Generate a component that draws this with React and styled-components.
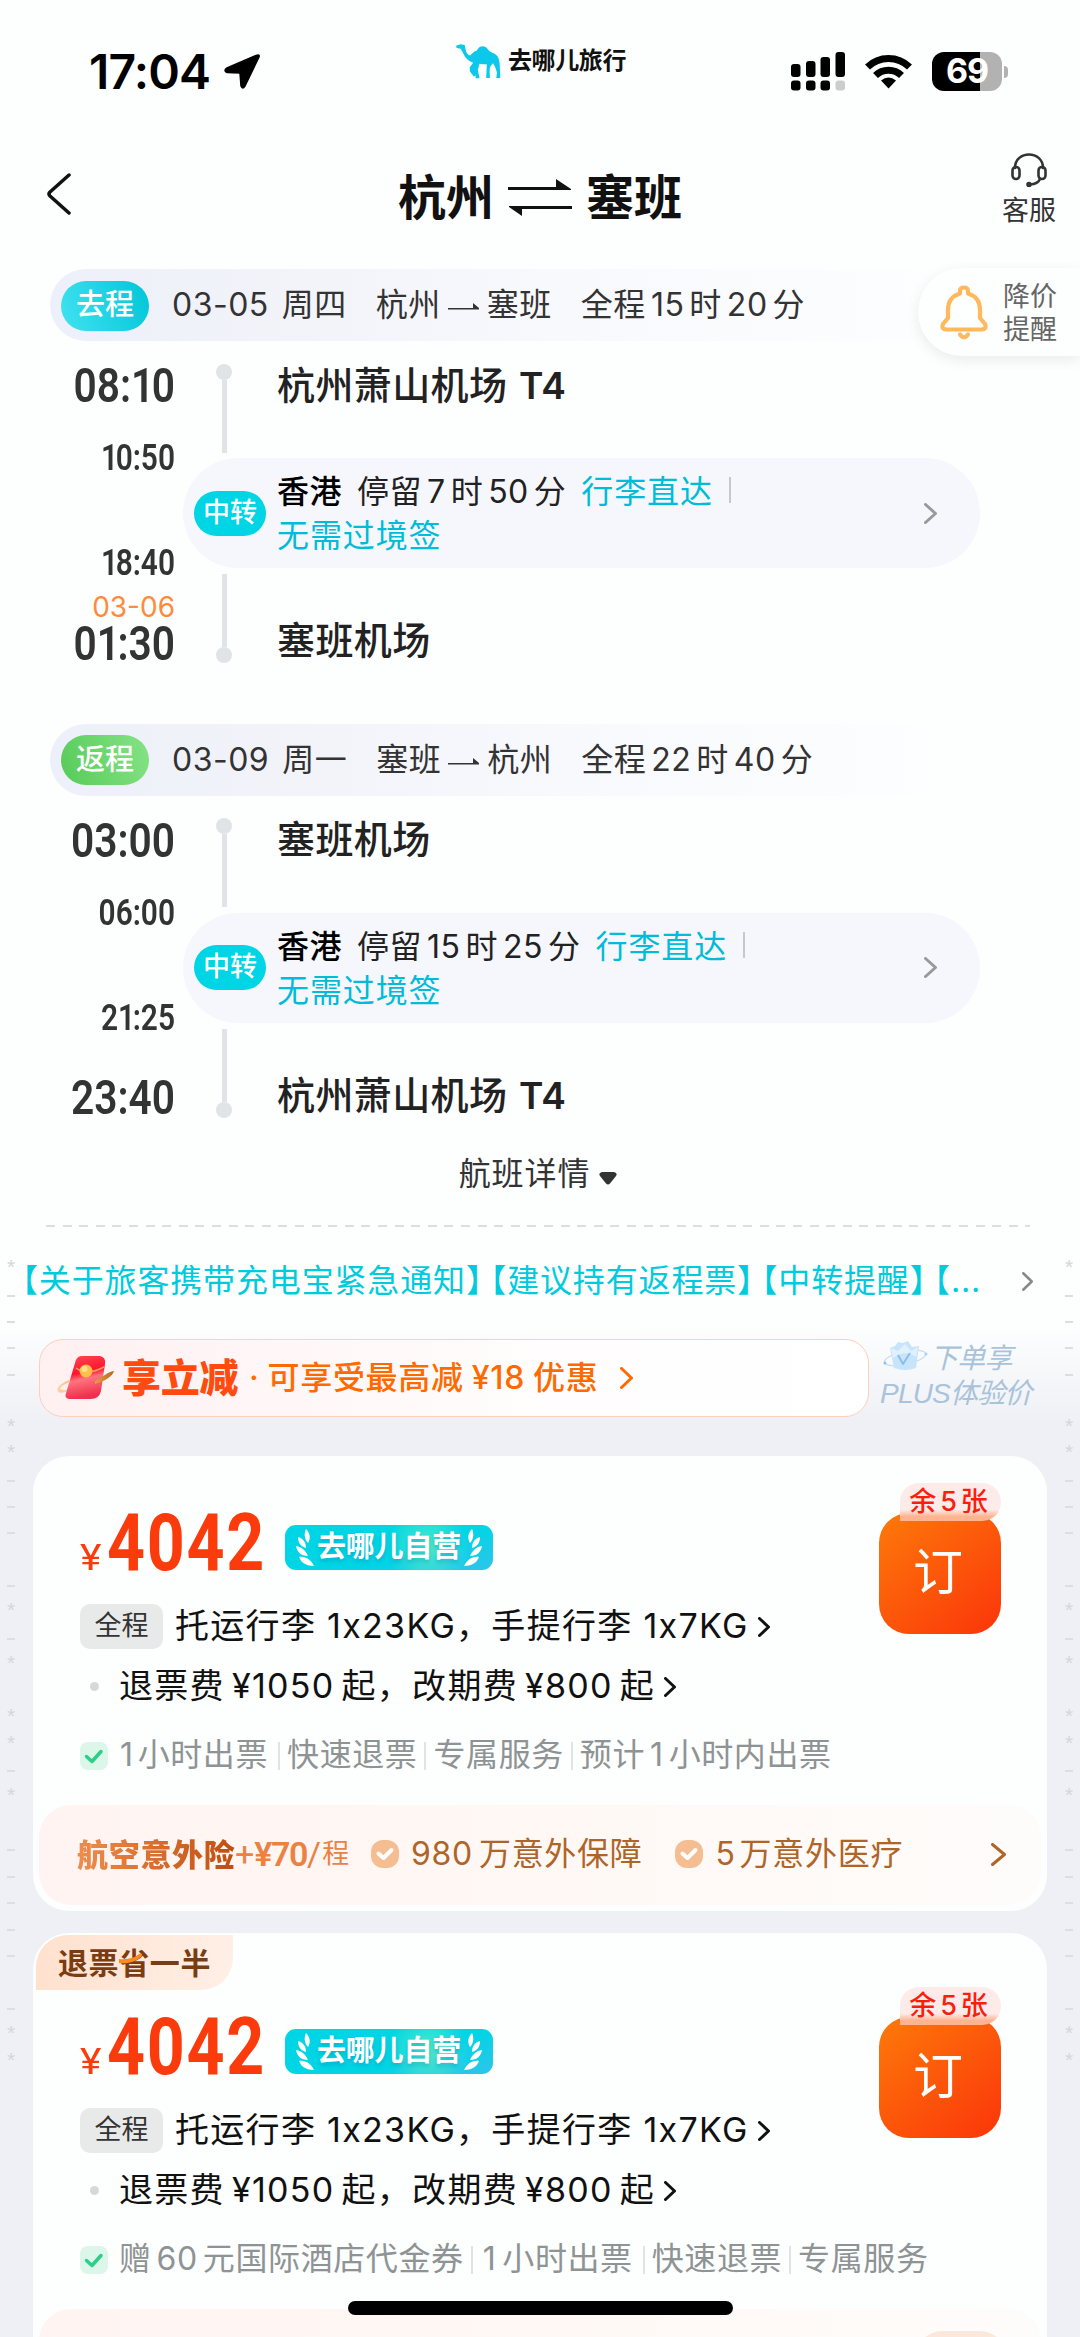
import React from "react";
import styled, { createGlobalStyle } from "styled-components";

const GlobalStyle = createGlobalStyle`
  * {
    box-sizing: border-box;
  }
  body {
    margin: 0;
    font-family: Inter, "Noto Sans CJK SC", sans-serif;
    line-height: 1.2;
    color: #333;
    background: #eff0f5;
  }
  p {
    margin: 0;
  }
  svg {
    display: block;
    flex: none;
  }
`;

const Page = styled.div`
  position: relative;
  width: 1080px;
  height: 2337px;
  overflow: hidden;
  white-space: nowrap;
  background: linear-gradient(
    #fdfefe 0,
    #fdfefe 1325px,
    #eff0f5 1425px,
    #eff0f5 100%
  );
`;

/* ---------- status bar ---------- */
const StatusBar = styled.div`
  display: flex;
  align-items: center;
  height: 143px;
  padding: 0 72px 0 89px;
`;
const Clock = styled.span`
  width: 134px;
  font-size: 48px;
  font-weight: 600;
  letter-spacing: -0.8px;
  color: #000;
`;
const Brand = styled.div`
  display: flex;
  align-items: center;
  gap: 7px;
  margin: 0 0 21px 195px;
  font-size: 24px;
  font-weight: 700;
  letter-spacing: -0.4px;
  color: #111;
`;
const StatusIcons = styled.div`
  display: flex;
  align-items: center;
  margin-left: auto;
`;
const Battery = styled.div`
  display: flex;
  align-items: center;
  justify-content: center;
  width: 70px;
  height: 39px;
  margin-left: 20px;
  border-radius: 12px;
  background: linear-gradient(90deg, #000 69%, #b2b2b2 69%);
  color: #fff;
  font-size: 34px;
  font-weight: 700;
  letter-spacing: -1px;
`;
const BatteryCap = styled.div`
  width: 4px;
  height: 12px;
  margin-left: 2px;
  border-radius: 0 4px 4px 0;
  background: #b2b2b2;
`;

/* ---------- nav ---------- */
const NavBar = styled.div`
  display: grid;
  grid-template-columns: 160px 1fr 160px;
  align-items: center;
  height: 109px;
  padding: 0 24px 0 46px;
`;
const BackIcon = styled.svg`
  margin-top: -7px;
`;
const Title = styled.div`
  display: flex;
  align-items: center;
  justify-content: center;
  gap: 14px;
  margin-left: -22px;
  font-size: 48px;
  font-weight: 700;
  color: #111;
`;
const Service = styled.div`
  display: flex;
  flex-direction: column;
  align-items: center;
  justify-self: end;
  margin-top: -12px;
  font-size: 27px;
  line-height: 40px;
  svg {
    margin-bottom: 4px;
  }
`;

/* ---------- journey ---------- */
const Journey = styled.div`
  padding-top: 17px;
`;
const LegHeader = styled.div`
  display: flex;
  align-items: center;
  height: 72px;
  margin: 0 120px 0 50px;
  padding: 1px 0 0 11px;
  border-radius: 36px 0 0 36px;
  background: linear-gradient(90deg, #edf0fa, #f3f4f9 30%, #f8f9fd 55%, #fdfefe);
  font-size: 32px;
  letter-spacing: 0.5px;
`;
const Direction = styled.span`
  display: flex;
  align-items: center;
  justify-content: center;
  width: 88px;
  height: 50px;
  margin-right: 23px;
  border-radius: 25px;
  background: ${(props) =>
    props.$back
      ? "linear-gradient(70deg, #56cb58, #86e386)"
      : "linear-gradient(70deg, #42e2f0, #00c6d8)"};
  color: #fff;
  font-size: 29px;
  font-weight: 500;
  letter-spacing: 0;
`;
const Part = styled.span`
  display: flex;
  align-items: center;
  margin-right: ${(props) => props.$gap || 0}px;
`;
const Num = styled.span`
  margin: 0 ${(props) => (props.$gap === undefined ? 5 : props.$gap)}px;
`;
const ArrowIcon = styled.svg`
  margin: 3px 7px 0 0;
`;

const LegBody = styled.div`
  display: grid;
  grid-template-columns: 183px 797px;
  height: ${(props) => props.$height}px;
`;
const Times = styled.div`
  display: flex;
  flex-direction: column;
  width: 175px;
`;
const Time = styled.span`
  display: flex;
  align-items: center;
  justify-content: flex-end;
  height: ${(props) => props.$height}px;
  margin-top: ${(props) => props.$top || 0}px;
  padding-top: 2px;
  font-family: Roboto, "Noto Sans CJK SC", sans-serif;
  font-size: ${(props) => (props.$small ? 36 : 49)}px;
  font-weight: 600;
  transform: scaleX(0.83);
  transform-origin: right center;
`;
const One = styled.span`
  letter-spacing: -3px;
`;
const DayShift = styled.span`
  display: flex;
  align-items: center;
  justify-content: flex-end;
  height: 33px;
  font-size: 28px;
  color: #ff8a3c;
`;
const StopRow = styled.div`
  display: flex;
  height: ${(props) => props.$height}px;
  padding-top: ${(props) => props.$top}px;
`;
const Track = styled.div`
  display: flex;
  flex-direction: ${(props) => (props.$end ? "column-reverse" : "column")};
  align-items: center;
  width: 82px;
  height: 89px;
  &::before {
    content: "";
    width: 16px;
    height: 16px;
    border-radius: 50%;
    background: #e1e4e6;
  }
  &::after {
    content: "";
    flex: 1;
    width: 5px;
    background: #e1e4e6;
  }
`;
const Station = styled.p`
  height: 40px;
  margin: ${(props) => props.$top}px 0 0 12px;
  font-size: 38px;
  line-height: 40px;
  font-weight: 500;
  letter-spacing: 0.4px;
  color: #222;
  b {
    margin-left: 1px;
    font-weight: 600;
    font-size: 37px;
  }
`;
const Transfer = styled.div`
  display: flex;
  align-items: center;
  height: 110px;
  padding: 0 43px 0 11px;
  border-radius: 55px;
  background: #f6f7fc;
`;
const TransferBadge = styled.span`
  display: flex;
  align-items: center;
  justify-content: center;
  width: 72px;
  height: 45px;
  margin-right: 11px;
  border-radius: 23px;
  background: #00d5e5;
  color: #fff;
  font-size: 27px;
  font-weight: 500;
`;
const TransferText = styled.div`
  flex: 1;
  padding-top: 2px;
  font-size: 32px;
  line-height: 44px;
  letter-spacing: 0.5px;
  color: #222;
  b {
    margin-right: 15px;
    font-weight: 500;
    color: #000;
  }
  em {
    font-style: normal;
    letter-spacing: 0.9px;
    color: #00bcd8;
  }
  em + i {
    margin-left: 16px;
  }
`;
const Stay = styled.span`
  margin-right: 15px;
`;
const Bar = styled.i`
  display: inline-block;
  width: 2px;
  height: ${(props) => props.$height || 26}px;
  margin: 0 ${(props) => props.$gap || 0}px;
  background: ${(props) => props.$color || "#c5c8d2"};
`;
const Details = styled.div`
  display: flex;
  align-items: center;
  justify-content: center;
  gap: 9px;
  height: 64px;
  margin-left: -4px;
  padding-bottom: 2px;
  font-size: 32px;
  letter-spacing: 0.9px;
  svg {
    margin-top: 7px;
  }
`;
const Dashes = styled.div`
  height: 2px;
  margin: 17px 50px 0 46px;
  background: repeating-linear-gradient(
    90deg,
    #dcdfe0 0,
    #dcdfe0 9px,
    transparent 9px,
    transparent 16.6px
  );
`;

const PriceAlert = styled.div`
  position: absolute;
  top: 268px;
  right: 0;
  display: flex;
  align-items: center;
  gap: 15px;
  width: 162px;
  height: 88px;
  padding-left: 22px;
  border-radius: 44px 0 0 44px;
  background: #fdfefe;
  box-shadow: 0 4px 14px rgba(0, 0, 0, 0.08);
  color: #666;
  font-size: 27px;
  line-height: 33px;
  div {
    padding-top: 2px;
  }
`;

/* ---------- notice + promo ---------- */
const Notice = styled.div`
  display: flex;
  align-items: center;
  height: 110px;
  padding-left: 22px;
  color: #00cbdd;
  font-size: 32px;
  letter-spacing: 0.85px;
  svg {
    margin-left: 41px;
  }
`;
const NoticeItem = styled.span`
  margin-right: 7.5px;
`;
// brackets take half a cell so neighbouring notices sit close together
const Bracket = styled.span`
  font-feature-settings: "halt";
`;
const PromoRow = styled.div`
  display: flex;
  height: 78px;
  margin-top: 2px;
  padding-left: 39px;
`;
const Promo = styled.div`
  display: flex;
  align-items: center;
  width: 830px;
  padding: 1px 0 0 17px;
  border: 1.5px solid #ffcfbb;
  border-radius: 24px;
  background: linear-gradient(90deg, #fff0f1, #fffdfd 60%, #fff);
  color: #ff6a00;
  font-size: 32px;
  font-weight: 500;
  letter-spacing: 0.7px;
  strong {
    margin: 0 11px 0 7px;
    font-size: 39px;
    font-weight: 900;
    letter-spacing: -0.3px;
    color: #ff4a10;
  }
`;
const PromoText = styled.span`
  margin: 0 8px;
`;
const Plus = styled.div`
  margin: 2px 0 0 11px;
  color: #a9c3da;
  font-size: 28px;
  line-height: 35px;
  font-style: italic;
  letter-spacing: -0.7px;
  div {
    display: flex;
    gap: 2px;
    margin-left: 3px;
  }
  p {
    font-family: "Liberation Sans", "Noto Sans CJK SC", sans-serif;
    font-size: 28px;
    letter-spacing: -0.8px;
  }
`;

/* ---------- fare cards ---------- */
const Card = styled.div`
  height: 455px;
  margin: ${(props) => props.$top}px 33px 0;
  border-radius: 36px;
  background: #fdfefe;
`;
const CardLabel = styled.div`
  display: flex;
  align-items: center;
  position: relative;
  top: 2.5px;
  width: 197px;
  height: 55px;
  margin: 0 0 -28px 3px;
  padding-left: 22px;
  border-radius: 32px 0 32px 0;
  background: linear-gradient(90deg, #ffe1ce, #ffefe6);
  color: #7a3c12;
  font-size: 30px;
  font-weight: 700;
  letter-spacing: 0.6px;
  svg {
    position: absolute;
    left: 83px;
    top: 18px;
  }
`;
const CardTop = styled.div`
  display: flex;
  justify-content: space-between;
  padding: 0 46px 0 47px;
`;
const PriceRow = styled.div`
  display: flex;
  align-items: center;
  height: 78px;
  margin-top: 48px;
`;
const Price = styled.span`
  display: flex;
  align-items: baseline;
  width: 205px;
  padding-top: 1px;
  font-family: Roboto, sans-serif;
  color: #fb3b0c;
  i {
    width: 27px;
    font-style: normal;
    font-size: 37px;
    font-weight: 400;
    transform: scaleX(1.1);
    transform-origin: left center;
  }
  b {
    margin-left: 8px;
    font-size: 79px;
    font-weight: 700;
    line-height: 78px;
    letter-spacing: 2px;
    transform: scaleX(0.84);
    transform-origin: left center;
  }
`;
const SelfRun = styled.span`
  display: flex;
  align-items: center;
  justify-content: space-between;
  width: 208px;
  height: 45px;
  margin-top: 10px;
  padding: 0 11px;
  border-radius: 11px;
  background: radial-gradient(
      circle at 45% 50%,
      rgba(110, 245, 190, 0.7),
      rgba(110, 245, 190, 0) 60%
    )
    90px 0 / 118px 45px no-repeat,
    linear-gradient(160deg, #00d5e5 60%, #2fc4ea);
  color: #fff;
  font-size: 29px;
  font-weight: 700;
  text-shadow: 0 3px 4px rgba(0, 120, 160, 0.35);
  letter-spacing: -0.2px;
`;
const Line = styled.div`
  display: flex;
  align-items: center;
  height: 60px;
  margin-top: ${(props) => props.$top || 0}px;
  font-size: 34px;
  letter-spacing: 1.3px;
  color: #111;
`;
const Scope = styled.span`
  display: flex;
  align-items: center;
  justify-content: center;
  width: 83px;
  height: 45px;
  margin-right: 12px;
  border-radius: 10px;
  background: #e8eaea;
  color: #333;
  font-size: 27px;
  letter-spacing: 0;
`;
const Dot = styled.i`
  width: 9px;
  height: 9px;
  margin: 0 20px 0 10px;
  border-radius: 50%;
  background: #d6d9da;
`;
const Perks = styled.div`
  display: flex;
  align-items: center;
  height: 78px;
  font-size: 32px;
  letter-spacing: 0.6px;
  color: #8e9394;
  svg {
    margin-right: 11px;
  }
`;
const Book = styled.div`
  display: flex;
  flex-direction: column;
  align-items: flex-end;
  width: 122px;
  margin: 27px 0 0 -200px;
`;
const Left = styled.span`
  position: relative;
  z-index: 1;
  display: flex;
  align-items: center;
  justify-content: center;
  width: 101px;
  height: 38px;
  margin-bottom: -8px;
  padding: 1px 4px 0 0;
  border-radius: 20px 20px 20px 0;
  background: linear-gradient(#fdebea 70%, #ffb491 88%);
  color: #fb1e0c;
  font-size: 27px;
  font-weight: 500;
`;
const BookButton = styled.div`
  display: flex;
  align-items: center;
  justify-content: center;
  width: 122px;
  height: 121px;
  padding: 0 4px 2px 0;
  border-radius: 30px;
  background: linear-gradient(140deg, #fd7a0a, #fb350a);
  color: #fff;
  font-size: 50px;
`;
const Insurance = styled.div`
  display: flex;
  align-items: center;
  height: 100px;
  margin: 10px 6px 0;
  padding: 0 35px 0 38px;
  border-radius: 32px;
  background: linear-gradient(90deg, #fff4f1, #fff9f6 60%, #fefcfb);
  font-size: 32px;
  letter-spacing: 0.7px;
  color: #af6428;
`;
const InsuranceName = styled.b`
  width: 158px;
  font-size: 31px;
  letter-spacing: 0.7px;
  font-weight: 900;
  background: linear-gradient(90deg, #f08d4c, #bf4e10);
  background-clip: text;
  -webkit-background-clip: text;
  color: transparent;
`;
const InsuranceFee = styled.span`
  display: flex;
  align-items: center;
  width: 136px;
  color: #eb8242;
  font-family: Roboto, "Noto Sans CJK SC", sans-serif;
  font-size: 34px;
  letter-spacing: 0;
  b {
    font-weight: 600;
    letter-spacing: -1.4px;
  }
  small {
    margin-left: 1px;
    font-size: 27px;
  }
`;
const Benefit = styled.span`
  display: flex;
  align-items: center;
  margin-right: 33px;
  svg {
    margin-right: 12px;
  }
`;
const MorePill = styled.div`
  align-self: flex-end;
  width: 90px;
  height: 78px;
  margin: 0 0 0 auto;
  border-radius: 26px;
  background: #fce8da;
`;

/* ---------- overlays ---------- */
const Rail = styled.div`
  position: absolute;
  top: 1251px;
  ${(props) => props.$side}: 7px;
  width: 8px;
  color: #d4d7da;
  font-family: "Liberation Sans", sans-serif;
  font-size: 21px;
  line-height: 26px;
`;
const Star = styled.div`
  height: 26.43px;
  padding-top: 3px;
`;
const Dash = styled.div`
  display: flex;
  align-items: center;
  height: 26.43px;
  padding-top: 10px;
  &::before {
    content: "";
    width: 8px;
    height: ${(props) => (props.$blank ? 0 : 2)}px;
    background: #dcdfe1;
  }
`;
const HomeIndicator = styled.div`
  position: absolute;
  left: 348px;
  bottom: 22px;
  width: 385px;
  height: 14px;
  border-radius: 7px;
  background: #000;
`;

const Chevron = ({ w = 13, h = 21, color = "#999", stroke = 3, ml = 0 }) => (
  <svg
    width={w}
    height={h}
    viewBox={`0 0 ${w} ${h}`}
    fill="none"
    stroke={color}
    strokeWidth={stroke}
    strokeLinecap="round"
    strokeLinejoin="round"
    style={ml ? { marginLeft: ml } : undefined}
  >
    <path
      d={`M${stroke / 2} ${stroke / 2}L${w - stroke / 2} ${h / 2}L${stroke / 2} ${h - stroke / 2}`}
    />
  </svg>
);

const Camel = () => (
  <svg width="45" height="35" viewBox="0 0 134 102" fill="#0cc8ea">
    <path d="M0 4L14 0L26 2L28 13C30 24 34 31 42 33C50 26 53 20 62 18C68 5 84 1 93 12C98 20 104 23 113 27C125 33 129 43 130 58L132 100H120L122 84L116 66L110 56C104 62 101 68 100 76L101 100H90L91 76L92 60C84 58 76 60 70 58L65 76L70 101H58L59 92L50 80L47 71L53 84L59 93L53 96L41 80V68L51 55C38 50 27 40 22 28L14 13L2 11Z" />
  </svg>
);

const Swap = () => (
  <svg width="64" height="38" viewBox="0 0 64 38" fill="#111">
    <path d="M0 8H48V0L63 10V11H0Z" />
    <path d="M64 27V30H14V37L1 28V27Z" />
  </svg>
);

const Laurel = ({ flip }) => (
  <svg
    width="18"
    height="37"
    viewBox="0 0 18 37"
    fill="#fff"
    transform={flip ? "scale(-1 1)" : undefined}
  >
    <path d="M10 0C14 4 15 9 12 14C8 10 8 4 10 0Z" />
    <path d="M2 8C8 10 10 14 10 19C4 17 2 13 2 8Z" />
    <path d="M0 17C6 18 10 22 12 27C5 27 1 23 0 17Z" />
    <path d="M3 28C10 27 15 31 18 37C11 37 5 34 3 28Z" />
  </svg>
);

const Envelope = () => (
  <svg width="58" height="46" viewBox="0 0 58 46">
    <defs>
      <linearGradient id="env" x1="0" y1="0" x2="0.2" y2="1">
        <stop offset="0" stopColor="#ff4a52" />
        <stop offset="0.45" stopColor="#ff1430" />
        <stop offset="0.6" stopColor="#ff7480" />
        <stop offset="1" stopColor="#f0304c" />
      </linearGradient>
      <linearGradient id="ring">
        <stop offset="0" stopColor="#ffd2a0" />
        <stop offset="0.6" stopColor="#f6a84a" />
        <stop offset="1" stopColor="#b06a20" />
      </linearGradient>
    </defs>
    <path
      d="M24 1H43Q49 2 48 9L44 36Q42 44 34 44H12Q7 43 9 38L18 8Q19 2 24 1Z"
      fill="url(#env)"
    />
    <path d="M19 13Q30 21 47 12" fill="none" stroke="#ff9a60" strokeWidth="1.5" />
    <circle cx="29" cy="16" r="6.5" fill="#ffc04a" />
    <circle cx="27.5" cy="14" r="3" fill="#ffe08a" />
    <path
      d="M12 25C-4 32 -2 40 8 37L10 35C0 36 2 31 13 27ZM38 29C48 26 56 21 57 16C50 17 46 22 38 26Z"
      fill="url(#ring)"
    />
  </svg>
);

const Crown = () => (
  <svg width="45" height="30" viewBox="0 0 45 30">
    <ellipse
      cx="22"
      cy="17"
      rx="21"
      ry="6.5"
      fill="none"
      stroke="#c3def4"
      strokeWidth="1.2"
      transform="rotate(-12 22 17)"
    />
    <path
      d="M7 7L12 5L15 1L20 2L25 0L29 6L36 5L33 27Q22 31 11 27Z"
      fill="#c6e5fb"
    />
    <path d="M8 7L15 10L22 3L28 10L35 6L33 16Q22 8 10 17Z" fill="#e0f1fd" />
    <path
      d="M15 14L20 23L27 12"
      fill="none"
      stroke="#8dbde6"
      strokeWidth="2"
      strokeLinejoin="round"
    />
    <circle cx="2" cy="22" r="1.5" fill="#8fc0ea" />
    <circle cx="43" cy="13" r="1.5" fill="#a9d2f4" />
  </svg>
);

const CheckBox = ({ bg, color, round, stroke = 3.5 }) => (
  <svg width="28" height="28" viewBox="0 0 28 28" fill="none">
    <rect width="28" height="28" rx={round ? 12 : 8} fill={bg} />
    <path
      d={round ? "M7.5 13.5L12.5 18L20.5 10" : "M6.5 14.5L12 19.5L21 9.5"}
      stroke={color}
      strokeWidth={stroke}
      strokeLinecap="round"
      strokeLinejoin="round"
    />
  </svg>
);

const legs = [
  {
    name: "去程",
    date: "03-05",
    day: "周四",
    from: "杭州",
    to: "塞班",
    total: [15, 20],
    times: ["08:10", "10:50", "18:40", "01:30"],
    shift: "03-06",
    start: ["杭州萧山机场", "T4"],
    end: ["塞班机场"],
    stay: [7, 50],
    height: 382.5,
  },
  {
    name: "返程",
    back: true,
    date: "03-09",
    day: "周一",
    from: "塞班",
    to: "杭州",
    total: [22, 40],
    times: ["03:00", "06:00", "21:25", "23:40"],
    start: ["塞班机场"],
    end: ["杭州萧山机场", "T4"],
    stay: [15, 25],
    height: 348,
  },
];

const ClockTime = ({ value, ...rest }) => (
  <Time {...rest}>
    {value.split("1").map((chunk, i) => (
      <React.Fragment key={i}>
        {i > 0 && <One>1</One>}
        {chunk}
      </React.Fragment>
    ))}
  </Time>
);

const StationName = ({ station, top }) => (
  <Station $top={top}>
    {station[0]} {station[1] && <b>{station[1]}</b>}
  </Station>
);

const Leg = ({ leg }) => (
  <>
    <LegHeader>
      <Direction $back={leg.back}>{leg.name}</Direction>
      <Part $gap={13}>{leg.date}</Part>
      <Part $gap={29}>{leg.day}</Part>
      <Part $gap={7}>{leg.from}</Part>
      <ArrowIcon width="32" height="8" viewBox="0 0 32 8" fill="#333">
        <path d="M0 5H25V0L31 5V6.5H0Z" />
      </ArrowIcon>
      <Part $gap={29}>{leg.to}</Part>
      <Part>
        全程<Num>{leg.total[0]}</Num>时<Num>{leg.total[1]}</Num>分
      </Part>
    </LegHeader>
    <LegBody $height={leg.height}>
      <Times>
        <ClockTime value={leg.times[0]} $height={89} />
        <ClockTime value={leg.times[1]} $small $height={56} />
        <ClockTime value={leg.times[2]} $small $height={56} $top={49} />
        <DayShift>{leg.shift}</DayShift>
        <ClockTime value={leg.times[3]} $height={38} />
      </Times>
      <div>
        <StopRow $height={117} $top={22.5}>
          <Track />
          <StationName station={leg.start} top={1} />
        </StopRow>
        <Transfer>
          <TransferBadge>中转</TransferBadge>
          <TransferText>
            <p>
              <b>香港</b>
              <Stay>
                停留<Num>{leg.stay[0]}</Num>时<Num>{leg.stay[1]}</Num>分
              </Stay>
              <em>行李直达</em>
              <Bar />
            </p>
            <p>
              <em>无需过境签</em>
            </p>
          </TransferText>
          <Chevron />
        </Transfer>
        <StopRow $height={95} $top={6}>
          <Track $end />
          <StationName station={leg.end} top={46} />
        </StopRow>
      </div>
    </LegBody>
  </>
);

const fares = [
  {
    perks: [
      <>
        <Num $gap={1}>1</Num>
        <Num $gap={3}>小时出票</Num>
      </>,
      "快速退票",
      "专属服务",
      <>
        预计<Num>1</Num>小时内出票
      </>,
    ],
    insurance: true,
  },
  {
    label: "退票省一半",
    perks: [
      <>
        赠<Num>60</Num>元国际酒店代金券
      </>,
      <>
        <Num $gap={3}>1</Num>
        <Num $gap={3}>小时出票</Num>
      </>,
      "快速退票",
      "专属服务",
    ],
  },
];

const Fare = ({ fare, top }) => (
  <Card $top={top}>
    {fare.label && (
      <CardLabel>
        {fare.label}
        <svg width="24" height="11" viewBox="0 0 24 11" fill="#ff8a1c">
          <path d="M0 6C8 7 16 5 22 0L23 3C17 9 9 11 0 10Z" />
        </svg>
      </CardLabel>
    )}
    <CardTop>
      <div>
        <PriceRow>
          <Price>
            <i>¥</i>
            <b>4042</b>
          </Price>
          <SelfRun>
            <Laurel />
            去哪儿自营
            <Laurel flip />
          </SelfRun>
        </PriceRow>
        <Line $top={15}>
          <Scope>全程</Scope>
          托运行李 1x23KG，手提行李 1x7KG
          <Chevron w={12} h={20} color="#111" ml={9} />
        </Line>
        <Line>
          <Dot />
          退票费<Num $gap={7}>¥1050</Num>起，改期费<Num $gap={7}>¥800</Num>起
          <Chevron w={12} h={20} color="#111" ml={9} />
        </Line>
        <Perks>
          <CheckBox bg="#dcf6ea" color="#2bcf8a" />
          {fare.perks.map((perk, i) => (
            <React.Fragment key={i}>
              {i > 0 && <Bar $gap={7} $height={28} $color="#e0e3e3" />}
              {perk}
            </React.Fragment>
          ))}
        </Perks>
      </div>
      <Book>
        <Left>
          余<Num $gap={4}>5</Num>张
        </Left>
        <BookButton>订</BookButton>
      </Book>
    </CardTop>
    <Insurance>
      {fare.insurance ? (
        <>
          <InsuranceName>航空意外险</InsuranceName>
          <InsuranceFee>
            +<b>¥70</b>/<small>程</small>
          </InsuranceFee>
          <Benefit>
            <CheckBox bg="#f5be92" color="#fff" round stroke={4} />
            980<Num $gap={3} />万意外保障
          </Benefit>
          <Benefit>
            <CheckBox bg="#f5be92" color="#fff" round stroke={4} />
            5<Num $gap={2} />万意外医疗
          </Benefit>
          <Chevron w={15} h={23} color="#af6428" ml="auto" />
        </>
      ) : (
        <MorePill />
      )}
    </Insurance>
  </Card>
);

const marks = "*---- **--- -*-* **-* ----- -**".split("");

const App = () => {
  return (
    <>
      <GlobalStyle />
      <Page>
        <StatusBar>
          <Clock>17:04</Clock>
          <svg width="38" height="37" viewBox="0 0 38 37">
            <path
              d="M33 2.5L4 15Q0 17.5 4 19.5L17 20L18 33Q19.5 37 22 33L36 4Q37 1 33 2.5Z"
              stroke="#000"
              strokeWidth="1.5"
            />
          </svg>
          <Brand>
            <Camel />
            去哪儿旅行
          </Brand>
          <StatusIcons>
            <svg width="54" height="39" viewBox="0 0 54 39">
              <rect x="0" y="12" width="9.5" height="13" rx="3" />
              <rect x="15" y="9" width="9.5" height="16" rx="3" />
              <rect x="29.5" y="5" width="9.5" height="20" rx="3" />
              <rect x="44.5" y="0" width="9.5" height="25" rx="3" />
              <rect x="0" y="28.5" width="9.5" height="10" rx="3" />
              <rect x="15" y="28.5" width="9.5" height="10" rx="3" />
              <rect x="29.5" y="28.5" width="9.5" height="10" rx="3" />
              <rect x="44.5" y="28.5" width="9.5" height="10" rx="3" fill="#ccc" />
            </svg>
            <svg
              width="47"
              height="35"
              viewBox="0 0 47 35"
              fill="none"
              stroke="#000"
              strokeWidth="7"
              style={{ marginLeft: 20 }}
            >
              <path d="M2.5 13A30 30 0 0 1 44.5 13" />
              <path d="M10.5 21.5A18.5 18.5 0 0 1 36.5 21.5" />
              <path d="M16 26.5Q23.5 20.5 31 26.5L23.5 34.5Z" fill="#000" stroke="none" />
            </svg>
            <Battery>69</Battery>
            <BatteryCap />
          </StatusIcons>
        </StatusBar>

        <NavBar>
          <BackIcon
            width="26"
            height="42"
            viewBox="0 0 26 42"
            fill="none"
            stroke="#111"
            strokeWidth="3.5"
            strokeLinecap="round"
            strokeLinejoin="round"
          >
            <path d="M23 2L4 19Q2 21 4 23L23 40" />
          </BackIcon>
          <Title>
            杭州
            <Swap />
            塞班
          </Title>
          <Service>
            <svg
              width="36"
              height="34"
              viewBox="0 0 36 34"
              fill="none"
              stroke="#333"
              strokeWidth="2.6"
              strokeLinecap="round"
            >
              <path d="M4 15C4 -3 32 -3 32 15" />
              <rect x="1.5" y="14" width="7" height="12" rx="3.5" />
              <rect x="27.5" y="14" width="7" height="12" rx="3.5" />
              <path d="M29 26Q27 31 19 31.5" />
              <circle cx="18" cy="31.5" r="1.5" />
            </svg>
            客服
          </Service>
        </NavBar>

        <Journey>
          {legs.map((leg) => (
            <Leg key={leg.name} leg={leg} />
          ))}
          <Details>
            航班详情
            <svg width="18" height="13" viewBox="0 0 18 13" fill="#333">
              <path d="M3 0H15Q19 1 17 4L11 11.5Q9 13.5 7 11.5L1 4Q-1 1 3 0Z" />
            </svg>
          </Details>
          <Dashes />
        </Journey>

        <Notice>
          {["关于旅客携带充电宝紧急通知", "建议持有返程票", "中转提醒"].map((text) => (
            <NoticeItem key={text}>
              <Bracket>【</Bracket>
              {text}
              <Bracket>】</Bracket>
            </NoticeItem>
          ))}
          <span>
            <Bracket>【</Bracket>...
          </span>
          <Chevron w={11} h={19} color="#888" stroke={2.5} />
        </Notice>

        <PromoRow>
          <Promo>
            <Envelope />
            <strong>享立减</strong>·<PromoText>可享受最高减</PromoText>¥18
            <Num $gap={8}>优惠</Num>
            <Chevron w={13} h={22} color="#ff6a00" ml={14} />
          </Promo>
          <Plus>
            <div>
              <Crown />
              下单享
            </div>
            <p>PLUS体验价</p>
          </Plus>
        </PromoRow>

        <Fare fare={fares[0]} top={39} />
        <Fare fare={fares[1]} top={22} />

        <PriceAlert>
          <svg
            width="48"
            height="55"
            viewBox="0 0 48 55"
            fill="none"
            stroke="#ffb85c"
            strokeWidth="4.2"
            strokeLinecap="round"
            strokeLinejoin="round"
          >
            <path d="M20 8.5V6Q20 2.5 24 2.5Q28 2.5 28 6V8.5Q40 12 40 25V33L45 39Q47 44 42 44.5H6Q1 44 3 39L8 33V25Q8 12 20 8.5Z" />
            <path d="M20 49.5Q24 55 28 49.5" />
          </svg>
          <div>
            降价
            <br />
            提醒
          </div>
        </PriceAlert>
        {["left", "right"].map((side) => (
          <Rail key={side} $side={side}>
            {marks.map((mark, i) =>
              mark === "*" ? (
                <Star key={i}>*</Star>
              ) : (
                <Dash key={i} $blank={mark === " "} />
              )
            )}
          </Rail>
        ))}
        <HomeIndicator />
      </Page>
    </>
  );
};

export default App;
